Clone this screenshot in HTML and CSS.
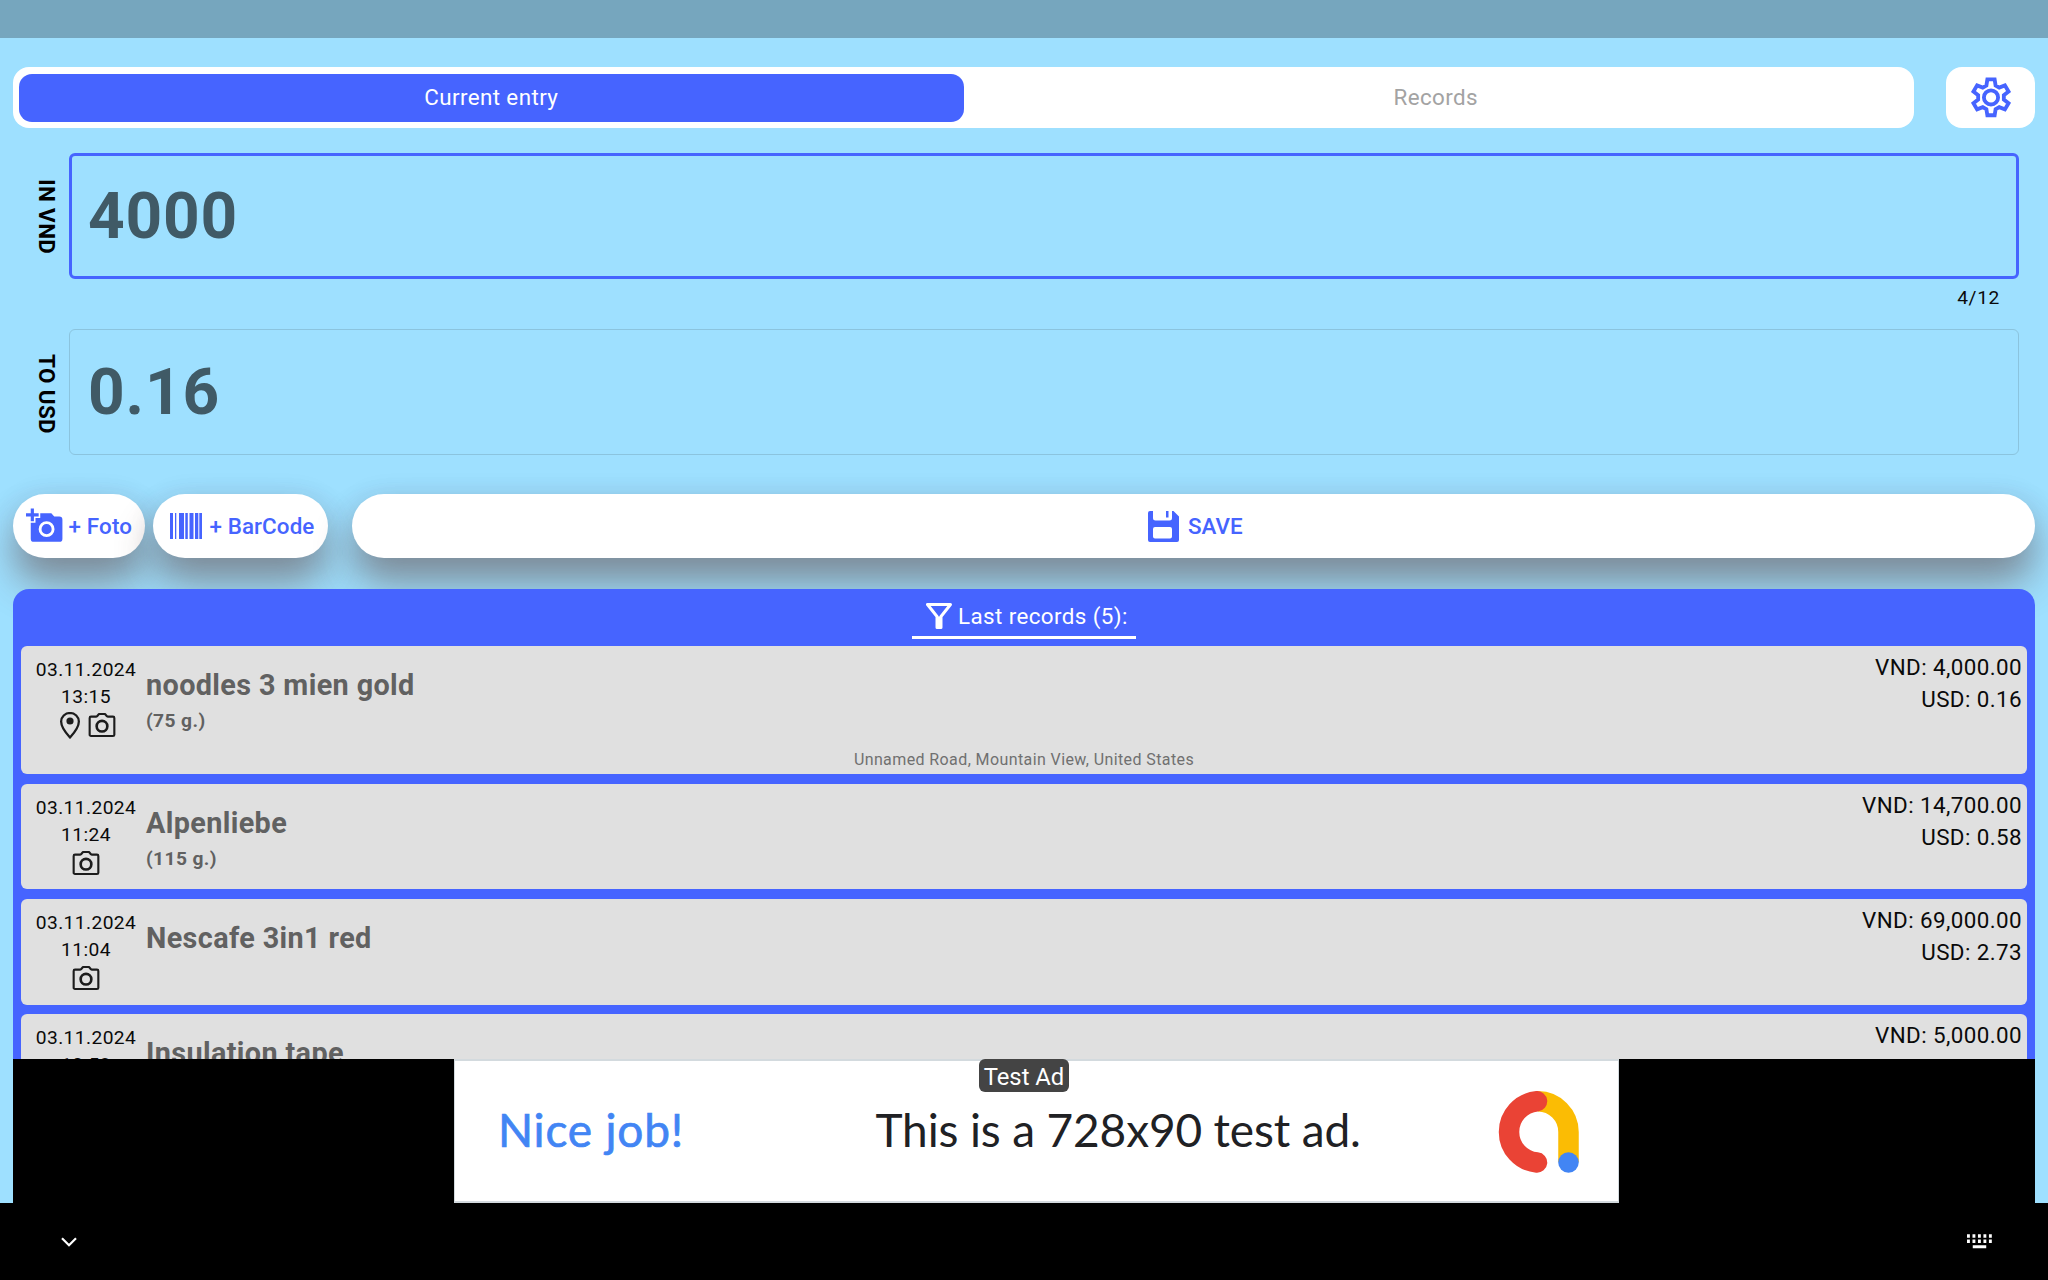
FILE: index.html
```html
<!DOCTYPE html>
<html lang="en">
<head>
<meta charset="utf-8">
<title>Current entry</title>
<link rel="stylesheet" href="styles.css">
</head>
<body>
<svg class="defs" aria-hidden="true">
  <symbol id="camera" viewBox="0 0 24 24"><path d="M14.25 3.75 15.7 5.4c.2.2.45.35.75.35H20.25c.55 0 1 .45 1 1V19.25c0 .55-.45 1-1 1H3.75c-.55 0-1-.45-1-1V6.75c0-.55.45-1 1-1H7.55c.3 0 .55-.15.75-.35L9.75 3.75z" fill="none" stroke="currentColor" stroke-width="1.6" stroke-linejoin="round"/><circle cx="12" cy="12.9" r="4" fill="none" stroke="currentColor" stroke-width="2"/></symbol>
  <symbol id="pin" viewBox="0 0 24 24"><path d="M12 2C8.130 2 5 5.130 5 9c0 5.250 7 13 7 13s7-7.750 7-13c0-3.870-3.130-7-7-7z" transform="translate(.6 1.100) scale(.95 .92)" fill="none" stroke="currentColor" stroke-width="1.800"/><circle cx="12" cy="9" r="2.700" fill="currentColor"/></symbol>
</svg>
<div class="screen">
  <div class="status"></div>
  <main class="app">
    <header class="top">
      <nav class="tabs">
        <button class="tab active">Current entry</button>
        <button class="tab">Records</button>
      </nav>
      <button class="settings" aria-label="Settings">
        <svg viewBox="0 0 24 24"><path fill="none" stroke="currentColor" stroke-width="2" d="M10.100 2.800h3.800l.5 3.200 1.900 1.100 2.950-1.150 1.900 3.250-2.450 1.900v2.200l2.450 1.900-1.900 3.250-2.950-1.150-1.900 1.100-.5 3.100h-3.800l-.5-3.100-1.900-1.100-2.950 1.150-1.900-3.250 2.450-1.900v-2.200L2.850 9.200l1.900-3.250L7.700 7.100l1.900-1.100z"/><circle cx="12" cy="12.200" r="3.700" fill="none" stroke="currentColor" stroke-width="2"/></svg>
      </button>
    </header>

    <section class="field">
      <span class="label">IN VND</span>
      <div class="box focused">4000</div>
    </section>
    <div class="counter">4/12</div>
    <section class="field">
      <span class="label second">TO USD</span>
      <div class="box">0.16</div>
    </section>

    <div class="actions">
      <button class="pill foto">
        <svg class="i-foto" viewBox="0 0 24 24"><path fill="currentColor" d="M3 4V1h2v3h3v2H5v3H3V6H0V4h3m3 6V7h3V4h7l1.830 2H21a2 2 0 0 1 2 2v12a2 2 0 0 1-2 2H5a2 2 0 0 1-2-2V10h3m7 9a5 5 0 0 0 5-5 5 5 0 0 0-5-5 5 5 0 0 0-5 5 5 5 0 0 0 5 5m-3.200-5a3.200 3.200 0 0 0 3.200 3.200 3.200 3.200 0 0 0 3.200-3.200 3.200 3.200 0 0 0-3.200-3.200A3.200 3.200 0 0 0 9.800 14z"/></svg>
        <span>+ Foto</span>
      </button>
      <button class="pill barcode">
        <svg class="i-bar" viewBox="0 0 32 26"><path fill="currentColor" d="M0 0h3v26H0zM5 0h1.300v26H5zM9 0h5v26H9zM15.300 0h2.500v26h-2.500zM19.500 0h4v26h-4zM25 0h3.300v26H25zM29.300 0H32v26h-2.700z"/></svg>
        <span>+ BarCode</span>
      </button>
      <button class="pill save">
        <svg class="i-save" viewBox="0 0 31 31"><path fill="currentColor" fill-rule="evenodd" d="M2 0h3v7a2.500 2.500 0 0 0 2.500 2.500h14a2.500 2.500 0 0 0 2.500-2.500V0h1.500L31 5.500V29a2 2 0 0 1-2 2H2a2 2 0 0 1-2-2V2a2 2 0 0 1 2-2zM7 16a2 2 0 0 0-2 2v7.500a2 2 0 0 0 2 2h15a2 2 0 0 0 2-2V18a2 2 0 0 0-2-2zM18 0h2.500v6.500H18z"/></svg>
        <span>SAVE</span>
      </button>
    </div>

    <section class="records">
      <div class="head">
        <div class="filter">
          <svg class="i-filter" viewBox="0 0 26 26"><path d="M1.500 1.500H24.500L15 13.500V24.500H11V13.500z" fill="none" stroke="currentColor" stroke-width="3" stroke-linejoin="round"/><path fill="currentColor" d="M11 13.500h4v11h-4z"/></svg>
          <span>Last records (5):</span>
        </div>
      </div>
      <article class="card tall">
        <div class="when"><span>03.11.2024</span><span>13:15</span><div class="icons"><svg><use href="#pin"/></svg><svg><use href="#camera"/></svg></div></div>
        <div class="what"><b>noodles 3 mien gold</b><small>(75 g.)</small></div>
        <div class="price"><span>VND: 4,000.00</span><span>USD: 0.16</span></div>
        <div class="place">Unnamed Road, Mountain View, United States</div>
      </article>
      <article class="card">
        <div class="when"><span>03.11.2024</span><span>11:24</span><div class="icons"><svg><use href="#camera"/></svg></div></div>
        <div class="what"><b>Alpenliebe</b><small>(115 g.)</small></div>
        <div class="price"><span>VND: 14,700.00</span><span>USD: 0.58</span></div>
      </article>
      <article class="card">
        <div class="when"><span>03.11.2024</span><span>11:04</span><div class="icons"><svg><use href="#camera"/></svg></div></div>
        <div class="what"><b>Nescafe 3in1 red</b></div>
        <div class="price"><span>VND: 69,000.00</span><span>USD: 2.73</span></div>
      </article>
      <article class="card">
        <div class="when"><span>03.11.2024</span><span>10:53</span></div>
        <div class="what"><b>Insulation tape</b></div>
        <div class="price"><span>VND: 5,000.00</span></div>
      </article>
    </section>

    <aside class="ad">
      <div class="banner">
        <span class="badge">Test Ad</span>
        <span class="nice">Nice job!</span>
        <span class="msg">This is a 728x90 test ad.</span>
        <svg class="logo" viewBox="0 0 82 82"><g fill="none" stroke-width="20.500"><path stroke="#fbbc04" d="M41 10.250A30.750 30.750 0 0 1 71.500 41V71"/><path stroke="#ea4335" stroke-linecap="round" d="M40 10.250A30.750 30.750 0 0 0 40 71.500"/></g><circle cx="71.500" cy="71.500" r="10.250" fill="#4285f4"/></svg>
      </div>
    </aside>
  </main>
  <footer class="navbar">
    <svg class="i-down" viewBox="0 0 16 10"><path d="M1 1.200 8 8.200 15 1.200" fill="none" stroke="#fff" stroke-width="2.200"/></svg>
    <svg class="i-keys" viewBox="0 0 26 15"><path fill="#fff" d="M0 0h3v3.500H0zM5.700 0h3v3.500h-3zM11.400 0h3v3.500h-3zM17.100 0h3v3.500h-3zM22.800 0h3v3.500h-3zM0 5.500h3V9H0zM5.700 5.500h3V9h-3zM11.400 5.500h3V9h-3zM17.100 5.500h3V9h-3zM22.800 5.500h3V9h-3zM6 11.500h14v3H6z"/></svg>
  </footer>
</div>
</body>
</html>
```
FILE: styles.css
```css
* { box-sizing: border-box; }
body { margin: 0; font-family: Roboto, sans-serif; color: #0a0a0a; }
button { border: 0; padding: 0; background: none; font: inherit; color: inherit; letter-spacing: inherit; }
svg { display: block; flex: none; }
.defs { display: none; }

.screen { width: 2048px; height: 1280px; overflow: hidden; display: flex; flex-direction: column; background: #9ee0ff; }
.status { flex: none; height: 38px; background: #76a6be; }
.app { flex: 1; min-height: 0; padding: 29px 13px 0; display: flex; flex-direction: column; }

.top { flex: none; display: flex; gap: 32px; height: 61px; }
.tabs { flex: 1; display: flex; padding: 6.500px 6px; background: #fff; border-radius: 16px; }
.tab { flex: 1; padding-bottom: 1px; font-size: 22.4px; letter-spacing: .4px; color: #a3a3a3; border-radius: 13px; }
.tab.active { background: #4664ff; color: #fff; }
.settings { width: 89px; background: #fff; border-radius: 16px; color: #4664ff; display: flex; align-items: center; justify-content: center; }
.settings svg { width: 46px; height: 46px; margin-top: -1px; }

.field { flex: none; display: flex; height: 126px; margin: 25px 16px 0 0; }
.label { width: 56px; writing-mode: vertical-rl; text-align: center; font-size: 22.4px; font-weight: 700; line-height: 45px; letter-spacing: .4px; color: #000; padding-top: 1px; }
.label.second { padding-top: 4px; }
.box { flex: 1; border: 1px solid #8bc4de; border-radius: 6px; padding-left: 18px; font-size: 64px; font-weight: 700; line-height: 125px; letter-spacing: .8px; color: #405a66; }
.box.focused { border: 3px solid #4664ff; padding-left: 16px; line-height: 122px; }
.counter { flex: none; height: 50px; margin-bottom: -25px; padding: 8px 35px 0 0; text-align: right; font-size: 19.2px; line-height: 22px; letter-spacing: .64px; }

.actions { flex: none; display: flex; margin-top: 39px; height: 64px; }
.pill { display: flex; align-items: center; background: #fff; border-radius: 32px; color: #4664ff; font-size: 22.4px; font-weight: 500; box-shadow: 0 26px 38px 0 rgba(95,55,45,.46), 0 2px 26px rgba(60,60,90,.12); }
.foto { width: 132px; margin-right: 8px; padding-left: 13px; gap: 4.500px; letter-spacing: .15px; }
.barcode { width: 175px; margin-right: 23.500px; padding-left: 17px; gap: 7.500px; letter-spacing: .1px; }
.save { flex: 1; justify-content: center; gap: 9px; padding-left: 4px; }
.i-foto { width: 38px; height: 38px; }
.i-bar { width: 32px; height: 26px; }
.i-save { width: 31px; height: 31px; }

.records { position: relative; flex: 1; min-height: 0; overflow: hidden; margin-top: 31px; padding: 0 8px; background: #4664ff; border-radius: 16px 16px 0 0; }
.head { height: 57.300px; display: flex; justify-content: center; align-items: flex-start; color: #fff; }
.filter { width: 224px; height: 49.500px; padding: 7px 0 0 14px; border-bottom: 3.500px solid #fff; display: flex; align-items: center; gap: 6px; font-size: 22.4px; letter-spacing: .4px; white-space: nowrap; }
.i-filter { width: 26px; height: 26px; }
.card { display: grid; grid-template-columns: 125px 1fr auto; height: 105.600px; margin-bottom: 9.600px; background: #e0e0e0; border-radius: 6px; overflow: hidden; }
.card.tall { height: 128px; grid-template-rows: 104px 24px; }
.when { display: flex; flex-direction: column; align-items: center; padding: 10px 0 0 5px; font-size: 19.2px; line-height: 27px; letter-spacing: .4px; }
.icons { display: flex; }
.icons svg { width: 32px; height: 32px; margin-top: -1px; color: #1c1c1c; }
.what { display: flex; flex-direction: column; padding-top: 18px; color: #616161; }
.what b { font-size: 28.8px; line-height: 42px; letter-spacing: .37px; }
.what small { font-size: 19.2px; font-weight: 700; line-height: 29px; letter-spacing: .4px; }
.price { display: flex; flex-direction: column; align-items: flex-end; padding: 5px 5px 0 0; font-size: 22.4px; line-height: 32px; letter-spacing: .4px; }
.place { grid-column: 1 / -1; text-align: center; font-size: 16px; line-height: 20px; letter-spacing: .4px; color: #707070; }

.ad { flex: none; height: 144px; background: #000; display: flex; padding-left: 441px; }
.banner { position: relative; width: 1165px; background: #fff; border: 2px solid #d3dade; border-width: 2px 1px; display: flex; align-items: center; font-family: Lato, sans-serif; font-size: 46px; white-space: nowrap; }
.badge { position: absolute; left: 524px; top: -2px; width: 90px; height: 33px; border-radius: 6px; background: #444; color: #fff; font: 23.800px/36px Roboto, sans-serif; text-align: center; }
.nice { width: 377.500px; margin: -4px 0 0 43px; color: #4285f4; letter-spacing: .8px; -webkit-text-stroke: .7px #4285f4; }
.msg { width: 621px; margin-top: -4px; color: #202124; letter-spacing: -.15px; }
.logo { width: 82px; height: 82px; margin-top: 2px; }

.navbar { flex: none; height: 77px; background: #000; display: flex; justify-content: space-between; align-items: center; padding: 0 56px 0 61px; }
.i-down { width: 16px; height: 10px; }
.i-keys { width: 25px; height: 15px; }
```
